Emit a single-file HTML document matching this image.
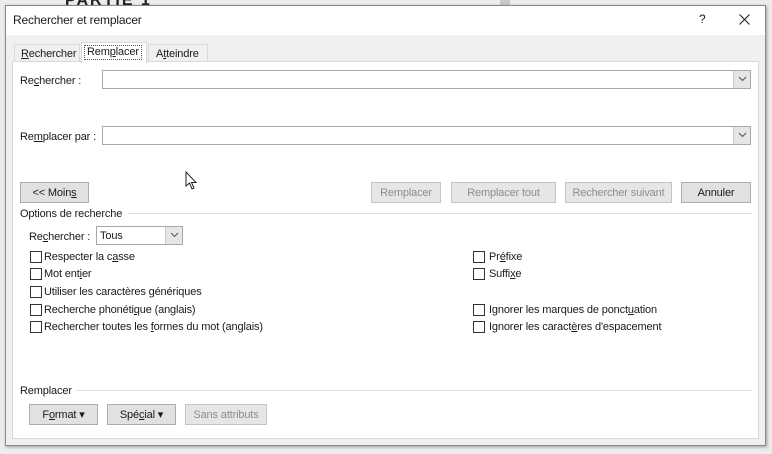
<!DOCTYPE html>
<html><head><meta charset="utf-8"><style>
*{margin:0;padding:0;box-sizing:border-box}
body{width:772px;height:454px;background:#ececec;font-family:"Liberation Sans",sans-serif;font-size:11px;letter-spacing:-0.15px;color:#1a1a1a;position:relative;overflow:hidden}
.a{position:absolute;white-space:nowrap}
.dlg{left:5px;top:5px;width:761px;height:441px;background:#f0f0f0;border:1px solid #8a8a8a;box-shadow:1px 1px 3px rgba(0,0,0,.35)}
.btn{position:absolute;height:21px;border:1px solid #adadad;background:#e1e1e1;text-align:center;line-height:20px;color:#1a1a1a}
.dis{color:#8d8d8d;border-color:#c4c4c4;background:#e6e6e6}
.inp{position:absolute;height:19px;background:#fff;border:1px solid #a9a9a9}
.dd{position:absolute;right:0;top:0;width:17px;height:17px;background:#e6e6e6;border-left:1px solid #c8c8c8}
.dd svg{position:absolute;left:4px;top:5px}
.cb{position:absolute;width:12px;height:12px;border:1px solid #333;background:#fff}
u{text-decoration:underline}
</style></head><body>
<div class="a" style="left:65px;top:-8px;font-size:16px;font-weight:bold;letter-spacing:2px;color:#222">PARTIE 1</div>
<div class="a" style="left:500px;top:0;width:10px;height:6px;background:#c8c8c8"></div>
<div class="a dlg"></div>
<div class="a" style="left:6px;top:6px;width:759px;height:29px;background:#fff"></div>
<div class="a" style="left:13px;top:13px;font-size:12px">Rechercher et remplacer</div>
<div class="a" style="left:699px;top:12px;font-size:12px">?</div>
<svg class="a" style="left:739px;top:14px" width="11" height="11"><path d="M0.5 0.5L10.5 10.5M10.5 0.5L0.5 10.5" stroke="#222" stroke-width="1.1"/></svg>
<div class="a" style="left:14px;top:44px;width:66px;height:18px;border:1px solid #d9d9d9;border-bottom:none;background:#f0f0f0;padding:3px 0 0 6px"><u>R</u>echercher</div>
<div class="a" style="left:148px;top:44px;width:60px;height:18px;border:1px solid #d9d9d9;border-bottom:none;background:#f0f0f0;padding:3px 0 0 7px">A<u>t</u>teindre</div>
<div class="a" style="left:12px;top:61px;width:747px;height:378px;background:#fff;border:1px solid #d9d9d9"></div>
<div class="a" style="left:81px;top:42px;width:66px;height:21px;background:#fff;border:1px solid #d9d9d9;border-bottom:none"></div>
<div class="a" style="left:84px;top:45px;height:15px;border:1px dotted #555;padding:0 2px;line-height:13px">Rem<u>p</u>lacer</div>
<div class="a" style="left:20px;top:75px">Re<u>c</u>hercher :</div>
<div class="inp" style="left:102px;top:70px;width:649px"><div class="dd"><svg width="9" height="6"><path d="M1 1L4.5 4.5L8 1" fill="none" stroke="#555"/></svg></div></div>
<div class="a" style="left:20px;top:131px">Re<u>m</u>placer par :</div>
<div class="inp" style="left:102px;top:126px;width:649px"><div class="dd"><svg width="9" height="6"><path d="M1 1L4.5 4.5L8 1" fill="none" stroke="#555"/></svg></div></div>
<svg class="a" style="left:185px;top:171px" width="13" height="20"><path d="M1 1L1 15L4.5 12L7 18L9 17L6.5 11.5L11 11.5Z" fill="#fff" stroke="#222" stroke-width="1"/></svg>
<div class="btn" style="left:20px;top:182px;width:69px">&lt;&lt; Moin<u>s</u></div>
<div class="btn dis" style="left:371px;top:182px;width:70px">Remplacer</div>
<div class="btn dis" style="left:451px;top:182px;width:105px">Remplacer tout</div>
<div class="btn dis" style="left:565px;top:182px;width:107px">Rechercher suivant</div>
<div class="btn" style="left:681px;top:182px;width:70px">Annuler</div>
<div class="a" style="left:20px;top:208px">Options de recherche</div>
<div class="a" style="left:128px;top:213px;width:624px;height:1px;background:#e0e0e0"></div>
<div class="a" style="left:29px;top:231px">Re<u>c</u>hercher :</div>
<div class="inp" style="left:96px;top:226px;width:87px;padding:3px 0 0 3px">Tous<div class="dd"><svg width="9" height="6"><path d="M1 1L4.5 4.5L8 1" fill="none" stroke="#555"/></svg></div></div>
<div class="cb" style="left:30px;top:251px"></div><div class="a" style="left:44px;top:251px">Respecter la c<u>a</u>sse</div>
<div class="cb" style="left:30px;top:268px"></div><div class="a" style="left:44px;top:268px">Mot ent<u>i</u>er</div>
<div class="cb" style="left:30px;top:286px"></div><div class="a" style="left:44px;top:286px">Utiliser les caractères <u>g</u>énériques</div>
<div class="cb" style="left:30px;top:304px"></div><div class="a" style="left:44px;top:304px">Recherche phonéti<u>q</u>ue (anglais)</div>
<div class="cb" style="left:30px;top:321px"></div><div class="a" style="left:44px;top:321px">Rechercher toutes les <u>f</u>ormes du mot (anglais)</div>
<div class="cb" style="left:473px;top:251px"></div><div class="a" style="left:489px;top:251px">Pr<u>é</u>fixe</div>
<div class="cb" style="left:473px;top:268px"></div><div class="a" style="left:489px;top:268px">Suffi<u>x</u>e</div>
<div class="cb" style="left:473px;top:304px"></div><div class="a" style="left:489px;top:304px">Ignorer les marques de ponct<u>u</u>ation</div>
<div class="cb" style="left:473px;top:321px"></div><div class="a" style="left:489px;top:321px">Ignorer les caract<u>è</u>res d'espacement</div>
<div class="a" style="left:20px;top:385px">Remplacer</div>
<div class="a" style="left:76px;top:390px;width:676px;height:1px;background:#e0e0e0"></div>
<div class="btn" style="left:29px;top:404px;width:69px">F<u>o</u>rmat ▾</div>
<div class="btn" style="left:107px;top:404px;width:69px">Spé<u>c</u>ial ▾</div>
<div class="btn dis" style="left:185px;top:404px;width:82px">Sans attributs</div>
</body></html>
